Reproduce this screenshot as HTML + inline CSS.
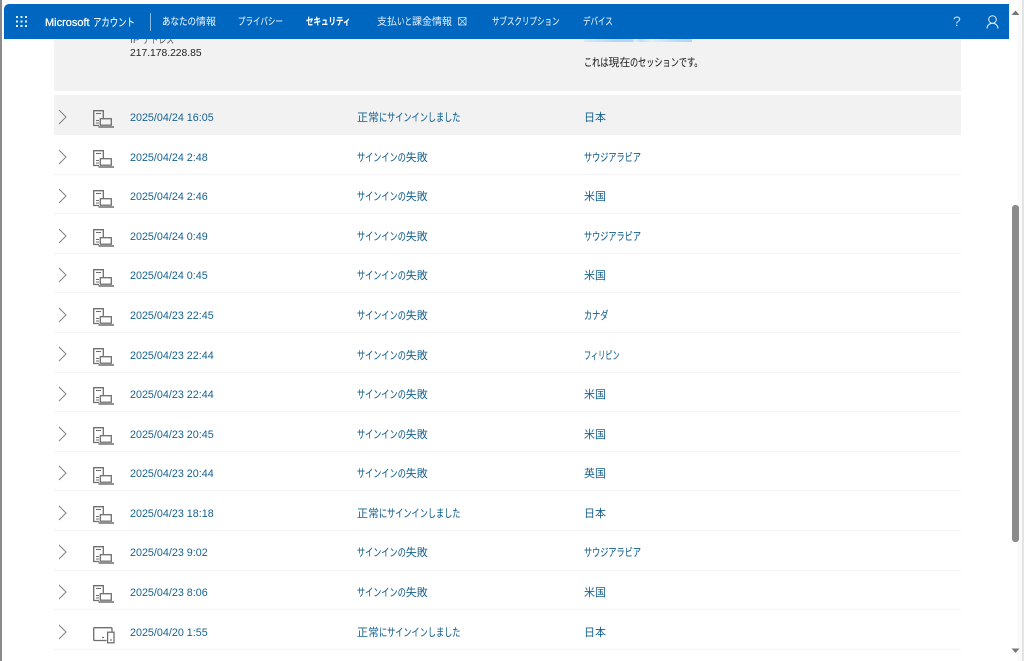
<!DOCTYPE html>
<html lang="ja">
<head>
<meta charset="utf-8">
<title>Microsoft アカウント</title>
<style>
html,body{margin:0;padding:0;width:1024px;height:661px;overflow:hidden;background:#fff}
body{position:relative;font-family:"Liberation Sans","Noto Sans CJK JP",sans-serif;font-size:11px;color:#17628f;filter:blur(.25px)}
div,svg{position:absolute}
.t{white-space:nowrap;line-height:14px}
.d{font-size:10.75px}
.k{display:inline-block;white-space:nowrap;transform:scaleX(.74);transform-origin:0 50%;-webkit-text-stroke:.12px currentColor}
.s3{width:24.4px}.s6{width:48.8px}.s7{width:57px}.s9{width:73.3px}.s10{width:81.4px}
.nav{color:#e6f0fa;font-size:10px;top:15.5px;white-space:nowrap;line-height:14px}
.nav .k{transform:scaleX(.75)}
.sep{left:54px;width:907px;height:1px;background:#f3f3f3}
</style>
</head>
<body>
<div style="left:0;top:0;width:2px;height:661px;background:#8a8a8a"></div>
<div style="left:2px;top:0;width:1022px;height:4px;background:#fbfbfb"></div>
<div style="left:1017px;top:0;width:5px;height:661px;background:#fafafa"></div>
<div style="left:1022px;top:0;width:2px;height:661px;background:#e4e4e4"></div>
<div style="left:1012px;top:205px;width:7px;height:337px;background:#8b8b8b;border-radius:3px"></div>
<svg style="left:1009px;top:8px" width="13" height="10"><path d="M2.5 7L6.5 2.5L10.5 7Z" fill="#777"/></svg>
<svg style="left:1009px;top:646px" width="13" height="10"><path d="M2.5 2.5L6.5 7L10.5 2.5Z" fill="#777"/></svg>

<div style="left:54px;top:39px;width:907px;height:52px;background:#f2f2f2"></div>
<div style="left:584px;top:39px;width:108px;height:3px;background:linear-gradient(90deg,#dfe8f3,#b9d3f2 30%,#b9d3f2 45%,#f2f2f2 47%,#c6daf2 52%,#e8edf3 62%,#c4d9f3 85%,#b5d2f5)"></div>
<div class="t" style="left:130px;top:33px;color:#666;font-size:10.5px">IP <span class="k" style="width:36px">アドレス</span></div>
<div class="t" style="left:130px;top:47px;color:#222;font-size:10.3px">217.178.228.85</div>
<div class="t" style="left:584px;top:56px;color:#222"><span class="k" style="width:24.4px">これは</span>現在<span class="k" style="width:73.3px">のセッションです。</span></div>

<div style="left:4px;top:4px;width:1005px;height:35px;background:#0067c0;border-radius:5px 0 0 0"></div>
<svg style="left:15px;top:15px" width="13" height="13" fill="#e8f1fa"><rect x="1" y="1" width="2" height="2"/><rect x="5.5" y="1" width="2" height="2"/><rect x="10" y="1" width="2" height="2"/><rect x="1" y="5.5" width="2" height="2"/><rect x="5.5" y="5.5" width="2" height="2"/><rect x="10" y="5.5" width="2" height="2"/><rect x="1" y="10" width="2" height="2"/><rect x="5.5" y="10" width="2" height="2"/><rect x="10" y="10" width="2" height="2"/></svg>
<div class="nav" style="left:45px;color:#fff;font-size:11px;-webkit-text-stroke:.25px #fff">Microsoft <span class="k" style="width:41px;transform:scaleX(.76)">アカウント</span></div>
<div style="left:150px;top:13px;width:1px;height:18px;background:#8dbbe3"></div>
<div class="nav" style="left:162px"><span class="k" style="width:34px;transform:scaleX(.85)">あなたの</span>情報</div>
<div class="nav" style="left:238px"><span class="k">プライバシー</span></div>
<div class="nav" style="left:306px;color:#fff;font-weight:700"><span class="k">セキュリティ</span></div>
<div class="nav" style="left:377px">支払<span class="k" style="width:15px">いと</span>課金情報</div>
<svg style="left:458px;top:17px" width="9" height="9" fill="none" stroke="#cfe0f2" stroke-width=".8"><rect x=".5" y=".5" width="7.5" height="7.5"/><path d="M1 1L8 8M8 1L1 8"/></svg>
<div class="nav" style="left:492px"><span class="k">サブスクリプション</span></div>
<div class="nav" style="left:583px"><span class="k">デバイス</span></div>
<div class="nav" style="left:953px;top:14px;font-size:14px;color:#c4daf0">?</div>
<svg style="left:985px;top:14px" width="15" height="16" fill="none" stroke="#e4eef8" stroke-width="1"><circle cx="7.5" cy="5.5" r="3.8"/><path d="M2 14.5C2 11.5 4.5 9.3 7.5 9.3S13 11.5 13 14.5"/></svg>

<svg width="0" height="0" style="left:0;top:0">
<defs>
<g id="chev"><path d="M1 1L8 8L1 15" fill="none" stroke="#808080" stroke-width="1"/></g>
<g id="pc" fill="none" stroke="#6e6e6e" stroke-width="1.3"><path d="M6 15.5H.7V.7H10.3V8"/><path d="M3 3.5H8M3 10.5H6M3 13H6" stroke-width="1"/><rect x="7.3" y="8.7" width="11" height="6.5"/><path d="M5.5 17H21" stroke-width="1.5"/></g>
<g id="dev" fill="none" stroke="#6e6e6e" stroke-width="1.3"><path d="M13.5 13.5H1.7Q.7 13.5 .7 12.5V1.7Q.7 .7 1.7 .7H18Q19 .7 19 1.7V4.5"/><rect x="14.6" y="5.2" width="6.4" height="10.6" fill="#fff"/><path d="M9 10.5H11M17 13H18.8" stroke-width="1.3"/></g>
</defs>
</svg>

<div style="left:54px;top:95px;width:907px;height:40px;background:#f2f2f2"></div>

<svg style="left:58px;top:109px" width="10" height="16"><use href="#chev"/></svg>
<svg style="left:93px;top:110px" width="22" height="19"><use href="#pc"/></svg>
<div class="t d" style="left:130px;top:111px">2025/04/24 16:05</div><div class="t" style="left:357px;top:111px">正常<span class="k s10">にサインインしました</span></div><div class="t" style="left:584px;top:111px">日本</div>
<div class="sep" style="top:174px"></div>

<svg style="left:58px;top:149px" width="10" height="16"><use href="#chev"/></svg>
<svg style="left:93px;top:150px" width="22" height="19"><use href="#pc"/></svg>
<div class="t d" style="left:130px;top:151px">2025/04/24 2:48</div><div class="t" style="left:357px;top:151px"><span class="k s6">サインインの</span>失敗</div><div class="t" style="left:584px;top:151px"><span class="k s7">サウジアラビア</span></div>

<svg style="left:58px;top:188px" width="10" height="16"><use href="#chev"/></svg>
<svg style="left:93px;top:190px" width="22" height="19"><use href="#pc"/></svg>
<div class="t d" style="left:130px;top:190px">2025/04/24 2:46</div><div class="t" style="left:357px;top:190px"><span class="k s6">サインインの</span>失敗</div><div class="t" style="left:584px;top:190px">米国</div>
<div class="sep" style="top:213px"></div>

<svg style="left:58px;top:228px" width="10" height="16"><use href="#chev"/></svg>
<svg style="left:93px;top:229px" width="22" height="19"><use href="#pc"/></svg>
<div class="t d" style="left:130px;top:230px">2025/04/24 0:49</div><div class="t" style="left:357px;top:230px"><span class="k s6">サインインの</span>失敗</div><div class="t" style="left:584px;top:230px"><span class="k s7">サウジアラビア</span></div>
<div class="sep" style="top:253px"></div>

<svg style="left:58px;top:267px" width="10" height="16"><use href="#chev"/></svg>
<svg style="left:93px;top:269px" width="22" height="19"><use href="#pc"/></svg>
<div class="t d" style="left:130px;top:269px">2025/04/24 0:45</div><div class="t" style="left:357px;top:269px"><span class="k s6">サインインの</span>失敗</div><div class="t" style="left:584px;top:269px">米国</div>
<div class="sep" style="top:292px"></div>

<svg style="left:58px;top:307px" width="10" height="16"><use href="#chev"/></svg>
<svg style="left:93px;top:308px" width="22" height="19"><use href="#pc"/></svg>
<div class="t d" style="left:130px;top:309px">2025/04/23 22:45</div><div class="t" style="left:357px;top:309px"><span class="k s6">サインインの</span>失敗</div><div class="t" style="left:584px;top:309px"><span class="k s3">カナダ</span></div>
<div class="sep" style="top:332px"></div>

<svg style="left:58px;top:346px" width="10" height="16"><use href="#chev"/></svg>
<svg style="left:93px;top:348px" width="22" height="19"><use href="#pc"/></svg>
<div class="t d" style="left:130px;top:349px">2025/04/23 22:44</div><div class="t" style="left:357px;top:349px"><span class="k s6">サインインの</span>失敗</div><div class="t" style="left:584px;top:349px"><span class="k" style="width:36px;transform:scaleX(.65)">フィリピン</span></div>
<div class="sep" style="top:372px"></div>

<svg style="left:58px;top:386px" width="10" height="16"><use href="#chev"/></svg>
<svg style="left:93px;top:387px" width="22" height="19"><use href="#pc"/></svg>
<div class="t d" style="left:130px;top:388px">2025/04/23 22:44</div><div class="t" style="left:357px;top:388px"><span class="k s6">サインインの</span>失敗</div><div class="t" style="left:584px;top:388px">米国</div>
<div class="sep" style="top:411px"></div>

<svg style="left:58px;top:426px" width="10" height="16"><use href="#chev"/></svg>
<svg style="left:93px;top:427px" width="22" height="19"><use href="#pc"/></svg>
<div class="t d" style="left:130px;top:428px">2025/04/23 20:45</div><div class="t" style="left:357px;top:428px"><span class="k s6">サインインの</span>失敗</div><div class="t" style="left:584px;top:428px">米国</div>
<div class="sep" style="top:451px"></div>

<svg style="left:58px;top:465px" width="10" height="16"><use href="#chev"/></svg>
<svg style="left:93px;top:467px" width="22" height="19"><use href="#pc"/></svg>
<div class="t d" style="left:130px;top:467px">2025/04/23 20:44</div><div class="t" style="left:357px;top:467px"><span class="k s6">サインインの</span>失敗</div><div class="t" style="left:584px;top:467px">英国</div>
<div class="sep" style="top:490px"></div>

<svg style="left:58px;top:505px" width="10" height="16"><use href="#chev"/></svg>
<svg style="left:93px;top:506px" width="22" height="19"><use href="#pc"/></svg>
<div class="t d" style="left:130px;top:507px">2025/04/23 18:18</div><div class="t" style="left:357px;top:507px">正常<span class="k s10">にサインインしました</span></div><div class="t" style="left:584px;top:507px">日本</div>
<div class="sep" style="top:530px"></div>

<svg style="left:58px;top:544px" width="10" height="16"><use href="#chev"/></svg>
<svg style="left:93px;top:546px" width="22" height="19"><use href="#pc"/></svg>
<div class="t d" style="left:130px;top:546px">2025/04/23 9:02</div><div class="t" style="left:357px;top:546px"><span class="k s6">サインインの</span>失敗</div><div class="t" style="left:584px;top:546px"><span class="k s7">サウジアラビア</span></div>
<div class="sep" style="top:570px"></div>

<svg style="left:58px;top:584px" width="10" height="16"><use href="#chev"/></svg>
<svg style="left:93px;top:585px" width="22" height="19"><use href="#pc"/></svg>
<div class="t d" style="left:130px;top:586px">2025/04/23 8:06</div><div class="t" style="left:357px;top:586px"><span class="k s6">サインインの</span>失敗</div><div class="t" style="left:584px;top:586px">米国</div>
<div class="sep" style="top:609px"></div>

<svg style="left:58px;top:624px" width="10" height="16"><use href="#chev"/></svg>
<svg style="left:93px;top:627px" width="23" height="17"><use href="#dev"/></svg>
<div class="t d" style="left:130px;top:626px">2025/04/20 1:55</div><div class="t" style="left:357px;top:626px">正常<span class="k s10">にサインインしました</span></div><div class="t" style="left:584px;top:626px">日本</div>
<div class="sep" style="top:649px"></div>
</body>
</html>
